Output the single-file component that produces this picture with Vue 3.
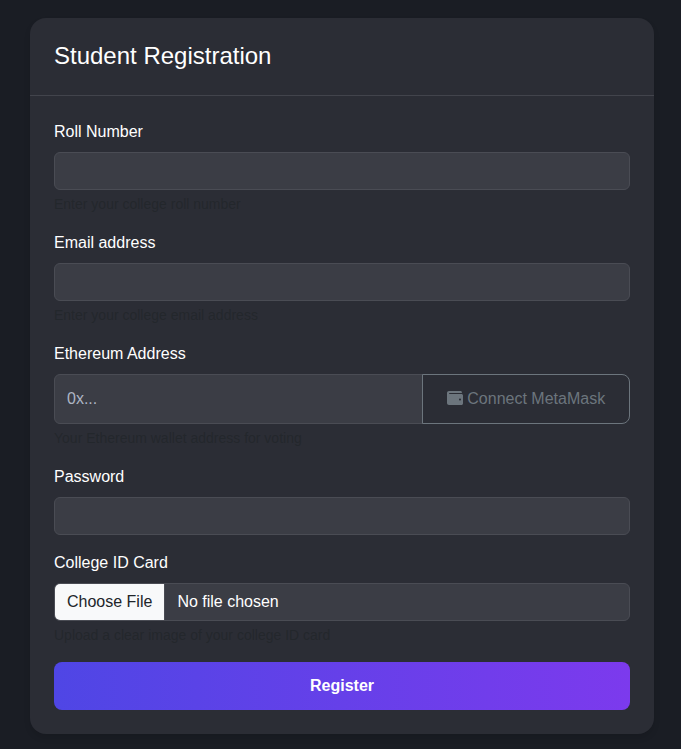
<script setup>
import { ref } from 'vue'

const roll = ref('')
const email = ref('')
const wallet = ref('')
const password = ref('')
</script>

<template>
  <main class="page">
    <section class="card">
      <header class="card-header">
        <h4>Student Registration</h4>
      </header>
      <form class="card-body" @submit.prevent>
        <div class="field">
          <label for="roll">Roll Number</label>
          <input id="roll" v-model="roll" class="control" type="text" />
          <div class="hint">Enter your college roll number</div>
        </div>
        <div class="field">
          <label for="email">Email address</label>
          <input id="email" v-model="email" class="control" type="email" />
          <div class="hint">Enter your college email address</div>
        </div>
        <div class="field">
          <label for="wallet">Ethereum Address</label>
          <div class="group">
            <input id="wallet" v-model="wallet" class="control" type="text" placeholder="0x..." />
            <button class="connect" type="button">
              <svg viewBox="0 0 512 512" width="16" height="16" aria-hidden="true">
                <path fill="currentColor" d="M461.2 128H80c-8.84 0-16-7.16-16-16s7.16-16 16-16h384c8.84 0 16-7.16 16-16 0-26.51-21.49-48-48-48H64C28.65 32 0 60.65 0 96v320c0 35.35 28.65 64 64 64h397.2c28.02 0 50.8-21.53 50.8-48V176c0-26.47-22.78-48-50.8-48zM416 336c-17.67 0-32-14.33-32-32s14.33-32 32-32 32 14.33 32 32-14.33 32-32 32z" />
              </svg>
              Connect MetaMask
            </button>
          </div>
          <div class="hint">Your Ethereum wallet address for voting</div>
        </div>
        <div class="field">
          <label for="password">Password</label>
          <input id="password" v-model="password" class="control" type="password" />
        </div>
        <div class="field">
          <label for="card">College ID Card</label>
          <label class="control file" for="card">
            <span class="choose">Choose File</span>
            <span class="filename">No file chosen</span>
          </label>
          <input id="card" type="file" hidden />
          <div class="hint">Upload a clear image of your college ID card</div>
        </div>
        <button class="register" type="submit">Register</button>
      </form>
    </section>
  </main>
</template>

<style>
body {
  background: #1a1d24;
}
</style>

<style scoped>
.page,
.page * {
  box-sizing: border-box;
}

.page {
  min-height: 749px;
  padding: 18px 27px 15px 30px;
  font: 16px/1.5 "Liberation Sans", Arial, sans-serif;
  color: #fff;
}

.card {
  background: #2b2d35;
  border-radius: 16px;
  box-shadow: 0 4px 6px rgba(0, 0, 0, 0.1);
}

.card-header {
  height: 78px;
  padding: 24px;
  border-bottom: 1px solid #42444c;
}

h4 {
  margin: 0;
  font-size: 24px;
  font-weight: 400;
  line-height: 1.2;
}

.card-body {
  padding: 24px;
}

.field {
  margin-bottom: 16px;
}

.field > label:first-child {
  display: block;
  margin-bottom: 8px;
}

.control {
  display: block;
  width: 100%;
  height: 38px;
  padding: 6px 12px;
  border: 1px solid #4a4c54;
  border-radius: 6px;
  background: #3b3d45;
  color: #fff;
  font: inherit;
  outline: none;
}

.control::placeholder {
  color: #adb5c4;
  opacity: 1;
}

.hint {
  margin-top: 4px;
  font-size: 14px;
  color: rgba(33, 37, 41, 0.75);
}

.group {
  display: flex;
  height: 50px;
}

.group .control {
  flex: 1;
  min-width: 0;
  height: 50px;
  border-radius: 6px 0 0 6px;
}

.connect {
  width: 208px;
  margin-left: -1px;
  padding: 0;
  border: 1px solid #6c757d;
  border-radius: 0 8px 8px 0;
  background: transparent;
  color: #6c757d;
  font: inherit;
  white-space: nowrap;
}

.connect svg {
  vertical-align: -2px;
}

.file {
  display: flex;
  padding: 0;
  overflow: hidden;
}

.choose {
  padding: 6px 12px;
  border-right: 1px solid #4a4c54;
  background: #f8f9fa;
  color: #212529;
}

.filename {
  padding: 6px 12px;
}

.register {
  display: block;
  width: 100%;
  height: 48px;
  padding: 0;
  border: 0;
  border-radius: 8px;
  background: linear-gradient(90deg, #4f46e5, #7c3aed);
  color: #fff;
  font: inherit;
  font-weight: 700;
}
</style>
